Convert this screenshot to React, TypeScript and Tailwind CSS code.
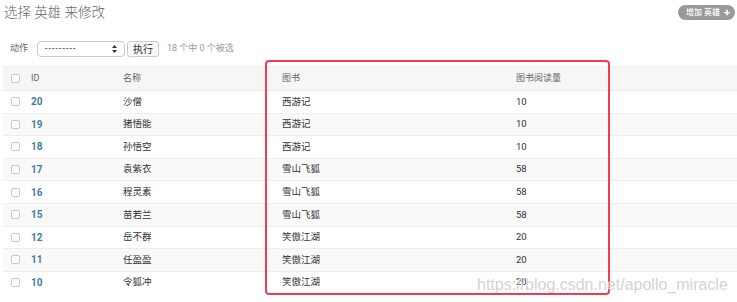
const heroes = [
  { id: 20, name: "沙僧", book: "西游记", reads: 10 },
  { id: 19, name: "猪悟能", book: "西游记", reads: 10 },
  { id: 18, name: "孙悟空", book: "西游记", reads: 10 },
  { id: 17, name: "袁紫衣", book: "雪山飞狐", reads: 58 },
  { id: 16, name: "程灵素", book: "雪山飞狐", reads: 58 },
  { id: 15, name: "苗若兰", book: "雪山飞狐", reads: 58 },
  { id: 12, name: "岳不群", book: "笑傲江湖", reads: 20 },
  { id: 11, name: "任盈盈", book: "笑傲江湖", reads: 20 },
  { id: 10, name: "令狐冲", book: "笑傲江湖", reads: 20 },
];

function Box() {
  return <span className="block w-[9px] h-[9px] rounded-[2px] border border-[#c8c8c8] bg-white" />;
}

export default function App() {
  return (
    <div
      className="relative w-[737px] h-[302px] overflow-hidden bg-white text-[#333]"
      style={{ fontFamily: 'Roboto, "Noto Sans CJK SC", sans-serif' }}
    >
      {/* Title + add button */}
      <div className="flex items-start justify-between pl-[4px] pr-[2px] pt-[2px] h-[40px]">
        <h1 className="text-[13.5px] font-light text-[#666] leading-[20px]">选择 英雄 来修改</h1>
        <button className="mt-[3px] flex items-center gap-[4px] h-[15px] pl-[8px] pr-[5px] rounded-full bg-[#999] text-white text-[8px] font-medium">
          增加 英雄 <span className="text-[11px] font-bold leading-none">+</span>
        </button>
      </div>

      {/* Actions */}
      <div className="flex items-center h-[18px] pl-[10px] text-[9px] text-[#666]">
        <span className="w-[27px]">动作</span>
        <div className="flex items-center justify-between w-[88px] h-[16px] px-[7px] border border-[#ccc] rounded-[4px] bg-white text-[#333]">
          <span className="tracking-[1px]">---------</span>
          <svg width="5" height="8" viewBox="0 0 5 8" className="fill-[#333]">
            <path d="M2.5 0 L5 3 H0 Z" />
            <path d="M0 5 H5 L2.5 8 Z" />
          </svg>
        </div>
        <span className="ml-[2px] flex items-center h-[16px] px-[5px] border border-[#ccc] rounded-[3px] bg-[#f8f8f8] text-[10px] text-[#333]">执行</span>
        <span className="ml-[8px] text-[#999]">18 个中 0 个被选</span>
      </div>

      {/* Table */}
      <div className="mt-[8px] ml-[3px]">
        <div className="flex items-center h-[24px] bg-[#f6f6f6] border-t border-[#eee] text-[9px] text-[#666]">
          <div className="w-[22px] pl-[8px]"><Box /></div>
          <div className="w-[98px] pl-[6px]">ID</div>
          <div className="w-[159px]">名称</div>
          <div className="w-[234px]">图书</div>
          <div>图书阅读量</div>
        </div>
        {heroes.map((h, i) => (
          <div
            key={h.id}
            className={`flex items-center h-[22.6px] border-t border-[#eee] text-[9.5px] ${i % 2 === 1 ? "bg-[#f9f9f9]" : "bg-white"}`}
          >
            <div className="w-[22px] pl-[8px]"><Box /></div>
            <div className="w-[98px] pl-[6px] font-bold text-[#447e9b] text-[10px]">{h.id}</div>
            <div className="w-[159px]">{h.name}</div>
            <div className="w-[234px]">{h.book}</div>
            <div>{h.reads}</div>
          </div>
        ))}
      </div>

      {/* Highlight frame */}
      <div className="absolute left-[265px] top-[60px] w-[345px] h-[235px] border-2 border-[#f33c4f] rounded-[4px] pointer-events-none" />

      {/* Watermark */}
      <span className="absolute left-[477px] top-[273px] text-[16px] text-[#d4d4d4]" style={{ fontFamily: '"Liberation Sans", sans-serif' }}>
        https://blog.csdn.net/apollo_miracle
      </span>
    </div>
  );
}
